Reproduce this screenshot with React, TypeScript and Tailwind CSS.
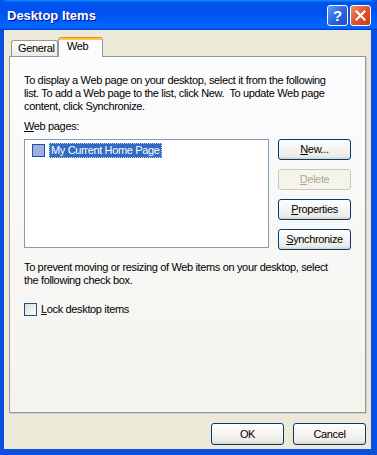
const btn =
    "flex items-center justify-center rounded-[3px] border border-[#003c74] bg-[linear-gradient(180deg,#ffffff,#ecebe6_86%,#d6d0c5)] text-black";
const btnDisabled =
    "flex items-center justify-center rounded-[3px] border border-[#c9c7ba] bg-[#f5f4ea] text-[#aca899]";

function TitleBar() {
    return (
        <div className="h-[30px] flex items-center rounded-t-[7px] bg-[linear-gradient(180deg,#0997ff,#0053ee_8%,#0050ee_40%,#0066ff_88%,#0066ff_93%,#005bff_95%,#003dd7_96%,#003dd7)]">
            <span className="ml-[7px] text-[13px] font-bold text-white [text-shadow:1px_1px_#0f1089]">
                Desktop Items
            </span>
            <div className="ml-auto mr-[6px] flex gap-[2px]">
                <div className="w-[21px] h-[21px] rounded-[3px] border border-white bg-[linear-gradient(135deg,#5a9bfb,#2a63df_55%,#1c4fcb)] flex items-center justify-center text-white text-[15px] font-bold leading-none">
                    ?
                </div>
                <div className="w-[21px] h-[21px] rounded-[3px] border border-white bg-[linear-gradient(135deg,#f08c6e,#e1532f_50%,#c53a18)] flex items-center justify-center">
                    <svg width="11" height="11" viewBox="0 0 11 11">
                        <path d="M1.5 1.5 L9.5 9.5 M9.5 1.5 L1.5 9.5" stroke="white" strokeWidth="2.2" strokeLinecap="square" />
                    </svg>
                </div>
            </div>
        </div>
    );
}

function Tabs() {
    return (
        <div className="h-[19px] pl-[2px] flex items-end">
            <div className="h-[16px] w-[47px] border border-b-0 border-[#919b9c] rounded-t-[3px] bg-[linear-gradient(180deg,#ffffff,#f3f3ef_60%,#ecebe5)] pl-[6px] leading-[15px]">
                General
            </div>
            <div className="relative z-10 -mb-px h-[20px] w-[45px] border-x border-[#919b9c] rounded-t-[3px] bg-[#fcfcfe] overflow-hidden">
                <div className="h-[1px] bg-[#e68b2c]" />
                <div className="h-[2px] bg-[#ffc73c]" />
                <div className="pl-[8px] leading-[13px]">Web</div>
            </div>
        </div>
    );
}

export default function App() {
    return (
        <div className="w-[377px] h-[455px] flex flex-col bg-[#0a4fe0] font-['Liberation_Sans',Arial,sans-serif] text-[11px] leading-[13px] text-black">
            <TitleBar />
            <div className="flex-1 ml-[4px] mr-[6px] mb-[6px] bg-[#ece9d8] flex flex-col pt-[7px] px-[5px] tracking-[-0.35px]">
                <Tabs />
                <div className="h-[357px] border border-[#919b9c] shadow-[1px_1px_0_#d0cec3] bg-[linear-gradient(180deg,#fcfcfe,#f4f3ee)] pt-[17px] pl-[14px] pr-[14px] flex flex-col">
                    <p>
                        To display a Web page on your desktop, select it from the following
                        <br />
                        list. To add a Web page to the list, click New.&nbsp; To update Web page
                        <br />
                        content, click Synchronize.
                    </p>
                    <p className="mt-[7px]">
                        <u>W</u>eb pages:
                    </p>
                    <div className="mt-[6px] flex gap-[9px]">
                        <div className="w-[245px] h-[109px] border border-[#7f9db9] bg-white pt-[3px] pl-[7px]">
                            <div className="flex items-center h-[15px]">
                                <div className="w-[13px] h-[13px] border border-[#23509a] bg-[#99b0e0]" />
                                <span className="ml-[4px] h-[15px] px-[2px] leading-[15px] bg-[#316ac5] text-white outline outline-1 outline-dotted outline-[#c7d3ee] -outline-offset-1">
                                    My Current Home Page
                                </span>
                            </div>
                        </div>
                        <div className="flex flex-col gap-[9px]">
                            <div className={`${btn} w-[73px] h-[21px]`}>
                                <span><u>N</u>ew...</span>
                            </div>
                            <div className={`${btnDisabled} w-[73px] h-[21px]`}>
                                <span><u>D</u>elete</span>
                            </div>
                            <div className={`${btn} w-[73px] h-[21px]`}>
                                <span><u>P</u>roperties</span>
                            </div>
                            <div className={`${btn} w-[73px] h-[21px]`}>
                                <span><u>S</u>ynchronize</span>
                            </div>
                        </div>
                    </div>
                    <p className="mt-[11px]">
                        To prevent moving or resizing of Web items on your desktop, select
                        <br />
                        the following check box.
                    </p>
                    <div className="mt-[16px] flex items-center">
                        <div className="w-[13px] h-[13px] border border-[#1c5180] bg-[linear-gradient(135deg,#dcdcd7,#ffffff)]" />
                        <span className="ml-[4px]">
                            <u>L</u>ock desktop items
                        </span>
                    </div>
                </div>
                <div className="mt-[10px] flex justify-end gap-[9px]">
                    <div className={`${btn} w-[73px] h-[22px]`}>OK</div>
                    <div className={`${btn} w-[73px] h-[22px]`}>Cancel</div>
                </div>
            </div>
        </div>
    );
}
